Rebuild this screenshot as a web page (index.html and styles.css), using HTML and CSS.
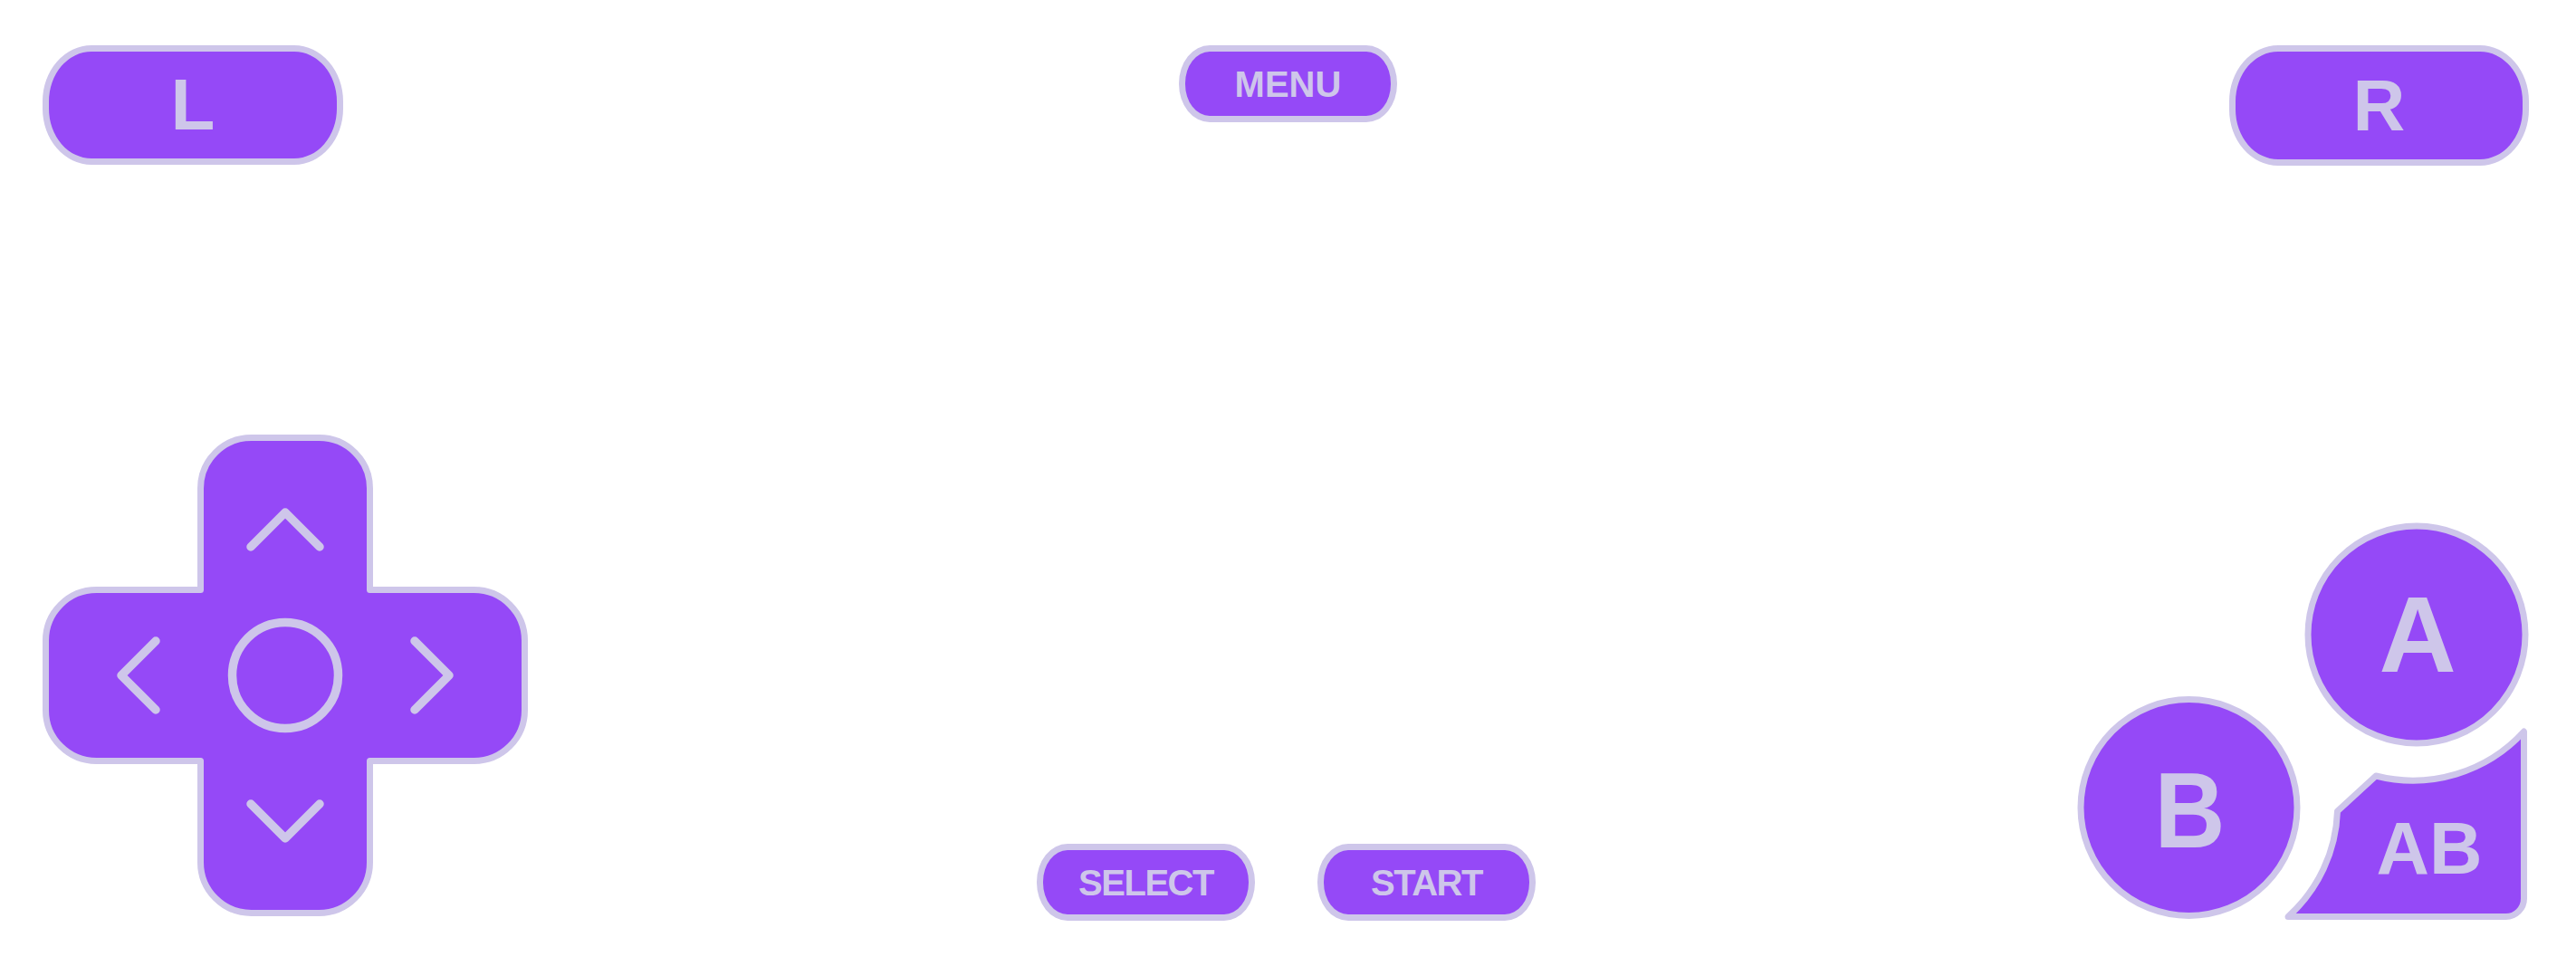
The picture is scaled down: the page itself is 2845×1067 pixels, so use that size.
FILE: index.html
```html
<!DOCTYPE html>
<html lang="en">
<head>
<meta charset="utf-8">
<title>Controller</title>
<link rel="stylesheet" href="styles.css">
</head>
<body>
<div class="skin">
  <header class="top">
    <div class="btn shoulder shoulder-l"><span class="lbl">L</span></div>
    <div class="btn pill menu"><span class="lbl">MENU</span></div>
    <div class="btn shoulder shoulder-r"><span class="lbl">R</span></div>
  </header>
  <main class="bottom">
    <svg class="dpad" width="538" height="534" viewBox="0 0 538 534">
      <path class="shape" d="M 231.5 4.5 H 306.5 A 56 56 0 0 1 362.5 60.5 V 172.5 H 477.5 A 56 56 0 0 1 533.5 228.5 V 305.5 A 56 56 0 0 1 477.5 361.5 H 362.5 V 473.5 A 56 56 0 0 1 306.5 529.5 H 231.5 A 56 56 0 0 1 175.5 473.5 V 361.5 H 60.5 A 56 56 0 0 1 4.5 305.5 V 228.5 A 56 56 0 0 1 60.5 172.5 H 175.5 V 60.5 A 56 56 0 0 1 231.5 4.5 Z"/>
      <g class="glyph">
        <polyline points="231,125 269,87 307,125"/>
        <polyline points="231,409 269,447 307,409"/>
        <polyline points="126,229 88,267 126,305"/>
        <polyline points="412,229 450,267 412,305"/>
        <circle cx="269" cy="267" r="58.5"/>
      </g>
    </svg>
    <div class="system">
      <div class="btn pill select"><span class="lbl">SELECT</span></div>
      <div class="btn pill start"><span class="lbl">START</span></div>
    </div>
    <svg class="face" width="504" height="446" viewBox="0 0 504 446">
      <circle class="shape" cx="377" cy="127" r="120"/>
      <circle class="shape" cx="125.5" cy="318" r="119.5"/>
      <path class="shape" d="M 235 438.5 A 164 164 0 0 0 289.5 322 L 332 283 A 166 166 0 0 0 495.5 234 V 418.5 A 20 20 0 0 1 475.5 438.5 Z"/>
      <text class="face-lbl big" x="378" y="168">A</text>
      <text class="face-lbl big" x="126.5" y="362" textLength="78" lengthAdjust="spacingAndGlyphs">B</text>
      <text class="face-lbl small" x="391" y="391">AB</text>
    </svg>
  </main>
</div>
</body>
</html>
```

FILE: styles.css
```css
* { box-sizing: border-box; }

html, body {
  margin: 0;
  padding: 0;
  background: #ffffff;
}

body {
  font-family: "Liberation Sans", Arial, sans-serif;
}

.skin {
  width: 2845px;
  height: 1067px;
  display: flex;
  flex-direction: column;
}

.top {
  display: flex;
  justify-content: space-between;
  align-items: flex-start;
  padding: 50px 52px 0 47px;
}

.btn {
  flex-shrink: 0;
  display: flex;
  align-items: center;
  justify-content: center;
  background: #9549f7;
  border: 7px solid #cec6ea;
  color: #cec6ea;
  font-weight: 700;
  line-height: 1;
}

.shoulder {
  height: 132px;
  border-radius: 54px / 62px;
  font-size: 80px;
}

.shoulder-l { width: 332px; }
.shoulder-r { width: 331px; height: 133px; }

.pill {
  height: 85px;
  border-radius: 34px / 42px;
  font-size: 40px;
}

.menu {
  width: 241px;
  margin-left: 4px;
}

.lbl {
  display: inline-block;
}

.bottom {
  flex: 1;
  display: flex;
  align-items: flex-end;
  padding: 0 49px 47px 46px;
}

.dpad {
  display: block;
  flex-shrink: 0;
  margin-bottom: 7px;
}

.shape {
  fill: #9549f7;
  stroke: #cec6ea;
  stroke-width: 7;
  stroke-linejoin: round;
}

.glyph {
  fill: none;
  stroke: #cec6ea;
  stroke-width: 9.5;
  stroke-linecap: round;
  stroke-linejoin: round;
}

.system {
  flex-shrink: 0;
  display: flex;
  gap: 69px;
  margin-left: 561px;
  margin-bottom: 3px;
}

.select,
.start {
  width: 241px;
}

.select .lbl,
.start .lbl {
  letter-spacing: -1.5px;
}

.face {
  display: block;
  flex-shrink: 0;
  margin-left: 596px;
}

.face-lbl {
  fill: #cec6ea;
  font-family: "Liberation Sans", Arial, sans-serif;
  font-weight: 700;
  text-anchor: middle;
}

.face-lbl.big { font-size: 118px; }
.face-lbl.small { font-size: 81px; }
```
